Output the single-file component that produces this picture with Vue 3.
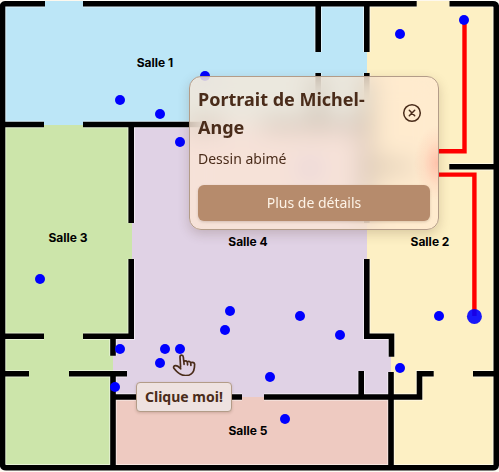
<script setup>
import { ref } from 'vue'

const open = ref(true)

const rooms = [
  { name: 'Salle 1', x: 155, y: 67 },
  { name: 'Salle 2', x: 430, y: 246 },
  { name: 'Salle 3', x: 68, y: 242 },
  { name: 'Salle 4', x: 248, y: 246 },
  { name: 'Salle 5', x: 248, y: 435 },
]

const works = [
  [464, 20], [400, 34], [205, 76], [120, 100], [160, 114], [180, 142],
  [310, 168], [40, 279], [230, 311], [225, 330], [300, 316], [340, 335],
  [439, 316], [120, 349], [165, 349], [180, 349], [160, 363], [115, 387],
  [270, 377], [400, 368], [285, 419],
]

const walls = [
  'M45 3.8H5Q2.5 3.8 2.5 7V464Q2.5 467.8 6 467.8H493Q496.3 467.8 496.3 464V7Q496.3 3.8 493 3.8H449.5',
  'M83 3.8H416.7',
  'M318.2 4V52M318.2 73V124.5M366.8 4V52M366.8 73V223',
  'M3 124.5H44M83 124.5H222M262 124.5H367M367 166.8H412',
  'M131.2 124.5V223M131.2 259V336.2H83M3 336.2H44',
  'M113 336V355.7M113 374V467M3 373.8H29M69 373.8H127',
  'M113 397H242M264 397H419.5V373.8H433.7M473 373.8H496',
  'M361.2 371V397M391 372V467',
  'M366.8 259V336.2H391.5V356.7',
  'M449.3 166.8H496',
].join('')
</script>

<template>
  <main class="plan">
    <svg class="map" viewBox="0 0 499 472" role="img" aria-label="Plan du musée">
      <g>
        <path class="room blue" d="M3 4H367V125H3z" />
        <path class="room blue" d="M45 1H83V6H45z" />
        <path class="room green" d="M3 125H132V336H113V467H3z" />
        <path class="room purple" d="M132 125H367V336H391V397H113V336H132z" />
        <path class="room pink" d="M113 397H391V467H113z" />
        <path class="room yellow" d="M367 4H416V1H450V4H496V467H391V336H367z" />
      </g>
      <path class="halo" :d="walls" />
      <path class="wall" :d="walls" />
      <text v-for="room in rooms" :key="room.name" class="name" :x="room.x" :y="room.y">{{ room.name }}</text>
      <path class="route" d="M464.5 20V151.3H438M438 174.6H474.4V316" />
      <circle v-for="([x, y], i) in works" :key="i" class="work" :cx="x" :cy="y" r="5" />
      <circle class="visitor" cx="474.4" cy="316.4" r="7.5" />
    </svg>

    <section v-if="open" class="card">
      <header class="head">
        <h2 class="title">Portrait de Michel-Ange</h2>
        <button class="close" type="button" aria-label="Fermer" @click="open = false">
          <svg class="cross" viewBox="0 0 20 20" aria-hidden="true">
            <circle cx="10" cy="10" r="8.3" />
            <path d="M7.3 7.3L12.7 12.7M12.7 7.3L7.3 12.7" />
          </svg>
        </button>
      </header>
      <p class="note">Dessin abimé</p>
      <button class="more" type="button">Plus de détails</button>
    </section>

    <div class="hint">
      <svg class="hand" viewBox="0 0 24 24" aria-hidden="true">
        <path d="M8.6 15.2L8 5Q8 3.2 9.6 3.2Q11.1 3.2 11.3 5L11.8 9.5Q14 8 15.3 9.9Q17.5 8.8 18.7 10.6Q22.2 9.8 22.6 12.2L22.4 15.5C21.8 21 18.5 23.6 13.5 23.6C8.5 23.5 5 20.3 1.7 15.9Q1.2 13.9 3.6 13.6Q5.6 13.4 8.7 16.8M11.8 9.5L12.1 12.3M15.3 9.9L15.6 12.8M18.7 10.6L18.9 13.4" />
      </svg>
      <span class="bubble">Clique moi!</span>
    </div>
  </main>
</template>

<style>
body {
  margin: 0;
  background: #fdf8ee;
}
</style>

<style scoped>
.plan {
  position: relative;
  font-family: "Noto Sans", sans-serif;
  color: #4a2c1a;
}
.map {
  display: block;
  width: 100%;
}
.blue { fill: #bce6f7; }
.green { fill: #cce5aa; }
.purple { fill: #e0d2e5; }
.pink { fill: #eecac1; }
.yellow { fill: #fdf0c4; }
.wall {
  fill: none;
  stroke: #000;
  stroke-width: 5.6;
}
.halo {
  fill: none;
  stroke: #fff;
  stroke-width: 7.6;
  opacity: 0.5;
}
.name {
  font-family: Inter, sans-serif;
  font-size: 12px;
  font-weight: 700;
  text-anchor: middle;
  fill: #000;
}
.route {
  fill: none;
  stroke: #f00;
  stroke-width: 4.4;
}
.work { fill: #00f; }
.visitor {
  fill: #00f;
  opacity: 0.9;
}
.card {
  position: absolute;
  top: 76px;
  left: 189px;
  box-sizing: border-box;
  width: 250px;
  padding: 8px;
  border: 1px solid #b39c88;
  border-radius: 12px;
  background:
    radial-gradient(24px 38px at 100% 86px, rgba(255, 130, 115, 0.4), rgba(255, 160, 140, 0.14) 60%, transparent),
    rgba(255, 232, 211, 0.7);
  backdrop-filter: blur(12px);
  box-shadow: 0 4px 12px rgba(74, 44, 26, 0.2);
}
.head {
  display: flex;
  align-items: center;
  justify-content: space-between;
  gap: 8px;
}
.title {
  margin: 0;
  font-size: 18px;
  line-height: 28px;
  font-weight: 700;
}
.close {
  display: flex;
  padding: 8px;
  border: 0;
  background: none;
  color: inherit;
}
.cross {
  width: 20px;
  height: 20px;
  fill: none;
  stroke: currentColor;
  stroke-width: 1.5;
  stroke-linecap: round;
}
.note {
  margin: 6px 0 14px;
  font-size: 14px;
  line-height: 24px;
}
.more {
  display: block;
  width: 100%;
  padding: 6px;
  border: 0;
  border-radius: 6px;
  background: #b68b6c;
  color: #fdf3e7;
  font-family: inherit;
  font-size: 14px;
  line-height: 24px;
  box-shadow: 0 1px 3px rgba(74, 44, 26, 0.2);
}
.hint {
  position: absolute;
  top: 352px;
  left: 136px;
  display: flex;
  flex-direction: column;
  align-items: center;
  gap: 6px;
}
.hand {
  width: 24px;
  height: 24px;
  fill: none;
  stroke: currentColor;
  stroke-width: 1.7;
  stroke-linejoin: round;
  stroke-linecap: round;
}
.bubble {
  padding: 4px 8px;
  border: 1px solid #b39c88;
  border-radius: 4px;
  background: #eee2e0;
  font-size: 14px;
  line-height: 20px;
  font-weight: 700;
  box-shadow: 0 1px 3px rgba(74, 44, 26, 0.2);
}
</style>
